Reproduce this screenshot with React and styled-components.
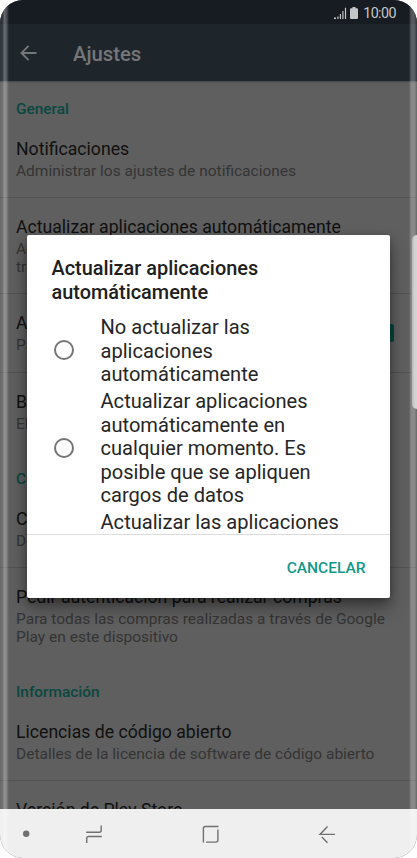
import React, { useState } from 'react';
import styled, { createGlobalStyle } from 'styled-components';

const GlobalStyle = createGlobalStyle`
  * {
    box-sizing: border-box;
  }
  body {
    margin: 0;
    background: #ffffff;
    font-family: Roboto, "Liberation Sans", sans-serif;
  }
  p, h1, h2, ul {
    margin: 0;
    padding: 0;
  }
`;

const Phone = styled.div`
  position: relative;
  display: flex;
  flex-direction: column;
  width: 417px;
  height: 858px;
  border-radius: 23px;
  background: #5f5f5f;
  overflow: hidden;
`;

const StatusBar = styled.div`
  display: flex;
  flex: none;
  justify-content: flex-end;
  align-items: center;
  height: 24px;
  padding: 2px 21px 0 0;
  background: #171c23;
  color: #c5c6c8;
`;

const Clock = styled.span`
  margin-left: 4px;
  font-size: 14.3px;
  line-height: 20px;
  letter-spacing: -0.55px;
`;

const Header = styled.header`
  display: flex;
  flex: none;
  align-items: center;
  height: 57px;
  padding: 0 20px;
  background: #1e262c;
  color: #757779;
`;

const HeaderTitle = styled.h1`
  margin: 2px 0 0 36px;
  font-size: 20.3px;
  font-weight: 500;
  line-height: 24px;
`;

const Content = styled.main`
  flex: 1;
  min-height: 0;
  overflow: hidden;
  background: #5f5f5f;
  box-shadow: inset 0 2px 2px -1px rgba(0, 0, 0, 0.3);
`;

const SectionTitle = styled.h2`
  height: 39px;
  padding: 18px 16px 0;
  font-size: 15.4px;
  font-weight: 500;
  line-height: 20px;
  color: #09483f;
`;

const Item = styled.div`
  display: flex;
  justify-content: space-between;
  align-items: flex-start;
  height: ${({ $height }) => $height || 78}px;
  padding: 17px 23px 0 16px;
  border-bottom: 1px solid ${({ $last }) => ($last ? 'transparent' : '#525252')};
`;

const ItemText = styled.div`
  width: 378px;
  flex: none;
`;

const ItemTitle = styled.p`
  font-size: 17.65px;
  line-height: 24px;
  color: #101010;
  white-space: nowrap;
`;

const ItemDetail = styled.p`
  font-size: 15.5px;
  line-height: 18px;
  padding-top: 1px;
  color: #343434;
  white-space: pre-line;
`;

const Checkbox = styled.span`
  flex: none;
  width: 18px;
  height: 18px;
  margin: 13px 0 0 -18px;
  border-radius: 2px;
  background: #06493f;
`;

const NavBar = styled.nav`
  display: flex;
  flex: none;
  align-items: center;
  height: 49px;
  background: #efefef;
  color: #707070;
  z-index: 3;

  svg {
    display: block;
    flex: none;
  }
`;

const Dialog = styled.div`
  position: absolute;
  top: 235px;
  left: 27px;
  z-index: 2;
  display: flex;
  flex-direction: column;
  width: 363px;
  height: 363px;
  border-radius: 2px;
  background: #ffffff;
  box-shadow: 0 10px 18px rgba(0, 0, 0, 0.35), 0 3px 8px rgba(0, 0, 0, 0.25);
`;

const DialogTitle = styled.h2`
  padding: 22px 24.5px 0;
  font-size: 19.9px;
  font-weight: 500;
  line-height: 23.5px;
  color: #202020;
  white-space: pre-line;
`;

const Options = styled.div`
  flex: 1;
  min-height: 0;
  margin-top: 12px;
  overflow: hidden;
  border-bottom: 1px solid #dcdcdc;
`;

const Option = styled.div`
  display: flex;
  align-items: center;
  padding-left: 26.5px;
  margin-bottom: 3.3px;
  cursor: pointer;
`;

const Radio = styled.span`
  display: flex;
  flex: none;
  justify-content: center;
  align-items: center;
  width: 20px;
  height: 20px;
  margin: -3px 27px 0 0;
  border: 2px solid #757575;
  border-radius: 50%;

  &::after {
    content: '';
    width: 10px;
    height: 10px;
    border-radius: 50%;
    background: ${({ $checked }) => ($checked ? '#009688' : 'transparent')};
  }
`;

const OptionLabel = styled.p`
  font-size: 20.1px;
  line-height: 23.6px;
  color: #262626;
  white-space: pre-line;
`;

const Actions = styled.div`
  display: flex;
  flex: none;
  justify-content: flex-end;
  align-items: center;
  height: 63px;
  padding: 2px 24.5px 0 0;
`;

const CancelButton = styled.button`
  padding: 0;
  border: none;
  background: none;
  font-family: inherit;
  font-size: 15.5px;
  font-weight: 500;
  line-height: 20px;
  color: #12988a;
  cursor: pointer;
`;

const Edge = styled.div`
  position: absolute;
  top: 0;
  bottom: 0;
  z-index: 4;
  pointer-events: none;
  ${({ $side }) =>
    $side === 'left'
      ? `left: 0;
         width: 9px;
         background: linear-gradient(90deg, rgba(255,255,255,0.08), rgba(255,255,255,0.1) 25%, rgba(255,255,255,0.32) 50%, rgba(255,255,255,0.26) 70%, rgba(255,255,255,0));`
      : `right: 0;
         width: 8px;
         background: linear-gradient(90deg, rgba(255,255,255,0), rgba(255,255,255,0.25) 25%, rgba(255,255,255,0.28) 65%, rgba(255,255,255,0.08));`}
`;

const EdgeHandle = styled.div`
  position: absolute;
  top: 235px;
  right: 0;
  z-index: 5;
  width: 5px;
  height: 174px;
  border-radius: 5px 0 0 5px;
  background: linear-gradient(90deg, #b5b5b5, #cfcfcf 40%, #d6d6d6);
`;

const optionList = [
  'No actualizar las\naplicaciones\nautomáticamente',
  'Actualizar aplicaciones\nautomáticamente en\ncualquier momento. Es\nposible que se apliquen\ncargos de datos',
  'Actualizar las aplicaciones\nautomáticamente solo a\ntravés de Wi-Fi',
];

const SettingItem = ({ title, detail, height, last, checkbox }) => (
  <Item $height={height} $last={last}>
    <ItemText>
      <ItemTitle>{title}</ItemTitle>
      <ItemDetail>{detail}</ItemDetail>
    </ItemText>
    {checkbox && <Checkbox />}
  </Item>
);

const StatusIcons = () => (
  <svg width="25" height="13" viewBox="0 0 25 13" fill="currentColor">
    <path d="M0 12h2v-1.500H0zM3.300 12h1.200V9.500H3.300zM5.800 12h1.200V7H5.800zM8.300 12h1.200V4H8.300zM10.900 12h1.200V.8h-1.200z" />
    <path d="M18.500 0h3v1.300H23a1 1 0 0 1 1 1V11a1 1 0 0 1-1 1h-6a1 1 0 0 1-1-1V2.300a1 1 0 0 1 1-1h1.500z" />
  </svg>
);

const NavIcons = () => (
  <svg width="417" height="49" viewBox="0 0 417 49" fill="none" stroke="currentColor" strokeWidth="1.4">
    <circle cx="26.200" cy="24.700" r="3.200" fill="currentColor" stroke="none" />
    <path d="M86.200 23.300H99.200Q101.200 23.300 101.200 21.300V16.500" />
    <path d="M101.800 27.500H88.700Q86.700 27.500 86.700 29.500V34" />
    <path d="M203.400 33.500V19.500Q203.400 17.500 205.400 17.500H218.500" />
    <path d="M217.900 20.500V31.100Q217.900 33.100 215.900 33.100H206" />
    <path d="M335 25.400H320L327.500 17.500" />
    <path d="M321.800 28L327.500 33.800" />
  </svg>
);

export default function App() {
  const [isOpen, setIsOpen] = useState(true);
  const [selected, setSelected] = useState(null);

  return (
    <>
      <GlobalStyle />
      <Phone>
        <StatusBar>
          <StatusIcons />
          <Clock>10:00</Clock>
        </StatusBar>
        <Header>
          <svg width="17" height="16" viewBox="0 0 17 16" fill="none" stroke="currentColor" strokeWidth="1.8">
            <path d="M16.500 8H1.500M8.600 .8L1.400 8l7.200 7.200" />
          </svg>
          <HeaderTitle>Ajustes</HeaderTitle>
        </Header>
        <Content>
          <SectionTitle>General</SectionTitle>
          <SettingItem title="Notificaciones" detail="Administrar los ajustes de notificaciones" />
          <SettingItem
            title="Actualizar aplicaciones automáticamente"
            detail={'Actualizar aplicaciones automáticamente a\ntravés de Wi-Fi'}
            height={96}
          />
          <SettingItem title="Agregar icono a pantalla" detail="Para las aplicaciones nuevas" height={79} checkbox />
          <SettingItem title="Borrar historial" detail="Elimina las búsquedas realizadas" last />
          <SectionTitle>Controles</SectionTitle>
          <SettingItem title="Control parental" detail="Desactivado" />
          <SettingItem
            title="Pedir autenticación para realizar compras"
            detail={'Para todas las compras realizadas a través de Google\nPlay en este dispositivo'}
            height={96}
            last
          />
          <SectionTitle>Información</SectionTitle>
          <SettingItem title="Licencias de código abierto" detail="Detalles de la licencia de software de código abierto" />
          <SettingItem title="Versión de Play Store" detail="" />
        </Content>
        <NavBar>
          <NavIcons />
        </NavBar>
        {isOpen && (
          <Dialog role="dialog">
            <DialogTitle>{'Actualizar aplicaciones\nautomáticamente'}</DialogTitle>
            <Options>
              {optionList.map((label, index) => (
                <Option key={index} onClick={() => setSelected(index)}>
                  <Radio $checked={selected === index} />
                  <OptionLabel>{label}</OptionLabel>
                </Option>
              ))}
            </Options>
            <Actions>
              <CancelButton onClick={() => setIsOpen(false)}>CANCELAR</CancelButton>
            </Actions>
          </Dialog>
        )}
        <Edge $side="left" />
        <Edge $side="right" />
        <EdgeHandle />
      </Phone>
    </>
  );
}
